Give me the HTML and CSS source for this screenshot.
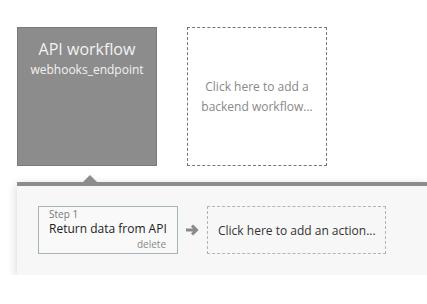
FILE: index.html
```html
<!DOCTYPE html>
<html lang="en">
<head>
    <meta charset="UTF-8">
    <title>Backend workflows</title>
    <link rel="stylesheet" href="styles.css">
</head>
<body>

    <div class="workflows">
        <div class="wf-card selected">
            <div class="wf-title">API workflow</div>
            <div class="wf-name">webhooks_endpoint</div>
        </div>
        <div class="wf-card add">
            <span>Click here to add a<br>backend workflow...</span>
        </div>
    </div>

    <div class="actions-panel">
        <div class="pointer"></div>
        <div class="actions-row">
            <div class="step">
                <div class="step-num">Step 1</div>
                <div class="step-title">Return data from API</div>
                <div class="step-delete">delete</div>
            </div>
            <svg class="arrow" width="14" height="12" viewBox="0 0 14 12">
                <path d="M1 6 H11 M7 1.5 L11.5 6 L7 10.5" fill="none" stroke="#8a8a8a" stroke-width="3"/>
            </svg>
            <div class="add-action">Click here to add an action...</div>
        </div>
    </div>

</body>
</html>
```

FILE: styles.css
```css
body {
    margin: 0;
    font-family: "Open Sans", Arial, sans-serif;
    background: #fff;
    overflow: hidden;
}
.workflows {
    display: flex;
    gap: 30px;
    padding: 27px 0 0 17px;
}
.wf-card {
    width: 140px;
    height: 139px;
    box-sizing: border-box;
}
.wf-card.selected {
    background: #8c8c8c;
    border: 1px solid #7a7a7a;
    color: #f2f2f2;
    text-align: center;
    padding-top: 10px;
}
.wf-title {
    font-size: 16px;
    line-height: 22px;
}
.wf-name {
    font-size: 12px;
    line-height: 18px;
    margin-top: 1px;
}
.wf-card.add {
    border: 1px dashed #777;
    display: flex;
    align-items: center;
    justify-content: center;
    text-align: center;
    font-size: 12px;
    line-height: 20px;
    color: #888;
    white-space: nowrap;
}
.actions-panel {
    position: relative;
    margin: 16px 0 0 17px;
    border-top: 4px solid #8c8c8c;
    background: #f7f7f7;
    box-shadow: 0 3px 10px rgba(0, 0, 0, 0.18);
    padding: 20px 0 21px 21px;
}
.pointer {
    position: absolute;
    left: 66px;
    top: -11px;
    width: 0;
    height: 0;
    border-left: 7px solid transparent;
    border-right: 7px solid transparent;
    border-bottom: 7px solid #8c8c8c;
}
.actions-row {
    display: flex;
    align-items: center;
}
.step {
    width: 140px;
    height: 48px;
    box-sizing: border-box;
    border: 1px solid #a6b3b7;
    background: #f9f9f9;
    padding: 1px 11px 0 10px;
    white-space: nowrap;
}
.step-num {
    font-size: 10px;
    line-height: 13px;
    color: #777;
}
.step-title {
    font-size: 12px;
    line-height: 16px;
    color: #222;
}
.step-delete {
    font-size: 10px;
    line-height: 15px;
    color: #888;
    text-align: right;
}
.arrow {
    margin: 0 8px 0 7px;
}
.add-action {
    width: 179px;
    height: 48px;
    box-sizing: border-box;
    border: 1px dashed #a9b9bb;
    display: flex;
    align-items: center;
    padding-left: 10px;
    font-size: 12px;
    color: #333;
    white-space: nowrap;
}
```
